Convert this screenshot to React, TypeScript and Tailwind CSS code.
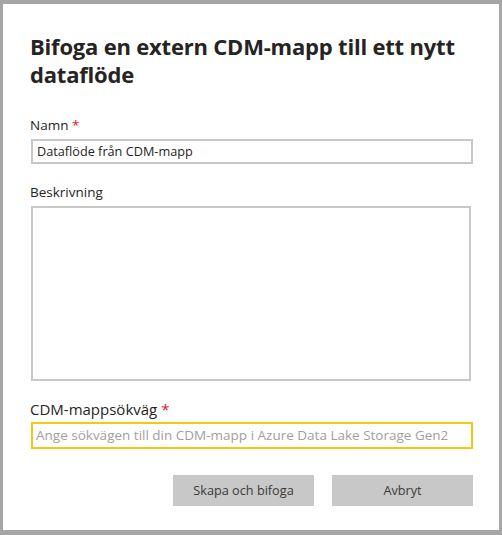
import React from "react";

export default function App() {
  const font = { fontFamily: '"Open Sans", "Noto Sans", sans-serif' };
  return (
    <div className="w-[502px] h-[535px] bg-white border-[#a6a6a6] border-t-4 border-l-[3px] border-r-[3px] border-b-[5px] box-border" style={font}>
      <div className="pl-[27px] pr-[26px] pt-[28px]">
        <h1 className="text-[22px] leading-[28px] font-bold text-[#252423] tracking-[-0.2px]">
          Bifoga en extern CDM-mapp till ett nytt dataflöde
        </h1>
        <div className="mt-[28px] text-[13.5px] leading-[18px] text-[#252423]">
          Namn <span className="text-[#e81123]">*</span>
        </div>
        <div className="mt-[5px] h-[25px] border-2 border-[#c8c8c8] flex items-center pl-[4px] text-[12.7px] text-[#252423] ml-px">
          Dataflöde från CDM-mapp
        </div>
        <div className="mt-[19px] text-[13.5px] leading-[18px] text-[#252423]">Beskrivning</div>
        <div className="mt-[5px] h-[175px] border-2 border-[#c8c8c8] ml-px mr-[2px]"></div>
        <div className="mt-[19px] text-[15px] leading-[18px] text-[#252423]">
          CDM-mappsökväg <span className="text-[#e81123]">*</span>
        </div>
        <div className="mt-[4px] h-[27px] border-2 border-[#f2c811] flex items-center pl-[3px] text-[13.5px] text-[#a19f9d] ml-px">
          Ange sökvägen till din CDM-mapp i Azure Data Lake Storage Gen2
        </div>
        <div className="mt-[26px] flex justify-end gap-[18px] pr-0">
          <button className="w-[141px] h-[31px] bg-[#c8c8c8] text-[12.7px] text-[#3b3a39]">Skapa och bifoga</button>
          <button className="w-[141px] h-[31px] bg-[#c8c8c8] text-[12.7px] text-[#3b3a39]">Avbryt</button>
        </div>
      </div>
    </div>
  );
}
